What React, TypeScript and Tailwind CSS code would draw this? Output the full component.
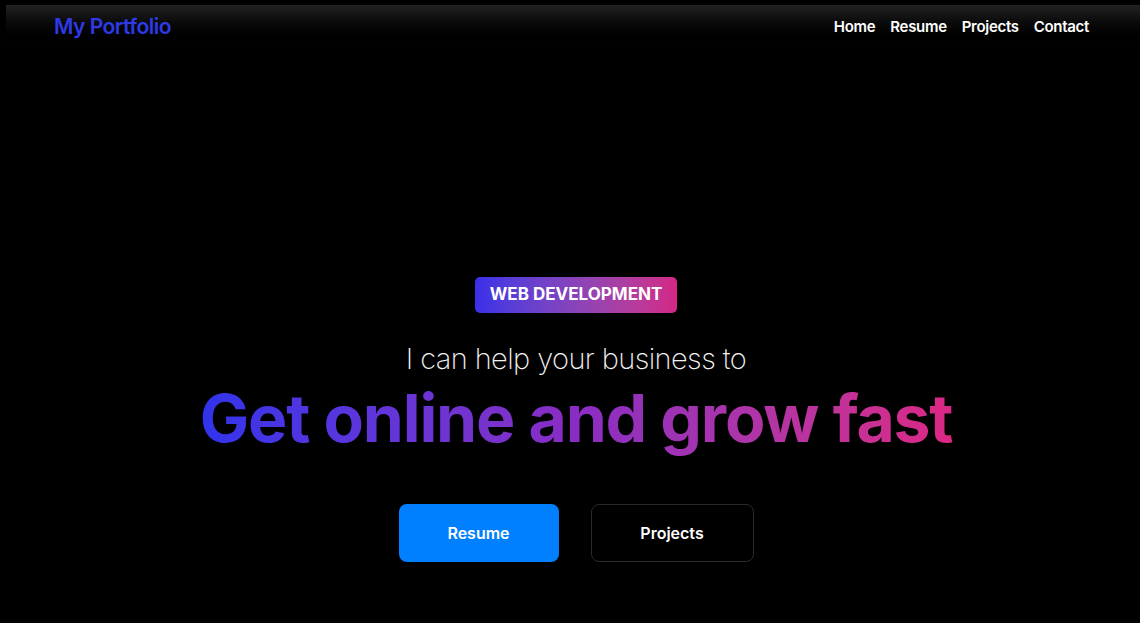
const navLinks = ["Home", "Resume", "Projects", "Contact"];

const App = () => {
    return (
        <div className="min-h-screen w-full overflow-hidden bg-black font-['Inter',sans-serif] text-white">
            <div className="ml-[6px] w-[1140px] pt-[5px]">
                <header className="flex h-[42px] items-center justify-between bg-gradient-to-b from-[#222222] to-[#000000] pl-[48px] pr-[57px]">
                    <a className="pt-[2px] text-[21px] font-semibold tracking-[-0.5px] text-[#2d3ae6]">My Portfolio</a>
                    <nav className="flex items-center gap-[15px] pt-[2px]">
                        {navLinks.map((link) => (
                            <a key={link} className="text-[15px] font-semibold tracking-[-0.3px] text-white">
                                {link}
                            </a>
                        ))}
                    </nav>
                </header>

                <main className="flex flex-col items-center pt-[230px]">
                    <span className="rounded-[5px] bg-gradient-to-r from-[#3a2fe8] to-[#d42686] px-[15px] py-[5px] text-[17px] font-bold text-white">
                        WEB DEVELOPMENT
                    </span>
                    <p className="mt-[24px] text-[29px] font-extralight tracking-[-0.6px] text-[#f2f2f2]">
                        I can help your business to
                    </p>
                    <h1 className="mt-[-2px] bg-gradient-to-r from-[#2f33ec] via-[#8a2cc4] to-[#dc2784] bg-clip-text text-[66px] font-bold leading-[80px] tracking-[-1.2px] text-transparent">
                        Get online and grow fast
                    </h1>
                    <div className="mt-[46px] flex gap-[32px]">
                        <button className="h-[58px] w-[160px] rounded-[8px] bg-[#0080ff] text-[16px] font-semibold text-white">
                            Resume
                        </button>
                        <button className="h-[58px] w-[163px] rounded-[8px] border border-[#2a2a2a] bg-black text-[16px] font-semibold text-white">
                            Projects
                        </button>
                    </div>
                </main>
            </div>
        </div>
    );
};

export default App;
